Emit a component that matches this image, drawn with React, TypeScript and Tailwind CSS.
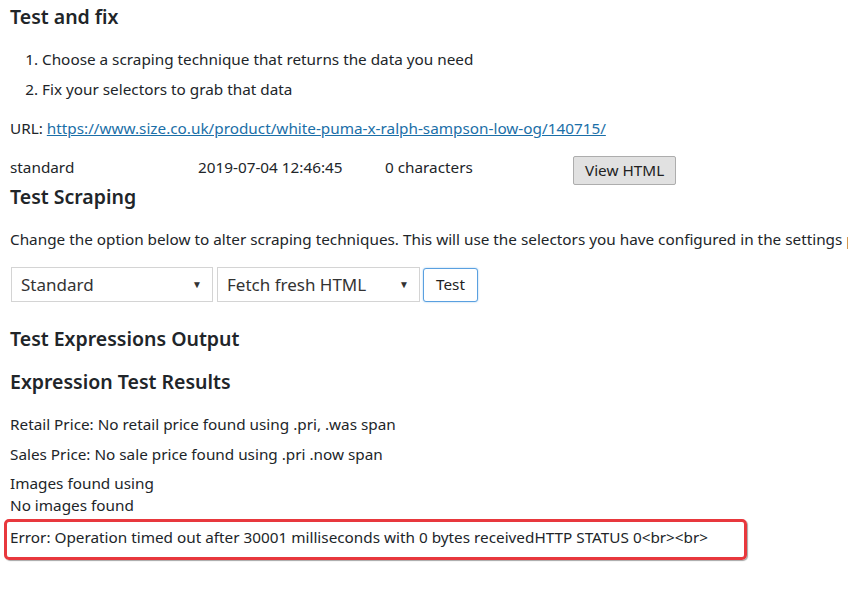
const FONT = { fontFamily: '"Noto Sans", "Open Sans", sans-serif' };

function Select({ value, width }: { value: string; width: string }) {
  return (
    <div
      className={`flex h-[35px] items-center justify-between border border-[#d4d4d4] bg-white pl-[9px] pr-[10px] text-[17px] text-[#333] ${width}`}
    >
      <span>{value}</span>
      <span className="text-[10px] text-[#333]">▼</span>
    </div>
  );
}

export default function App() {
  return (
    <div
      className="relative h-[605px] w-[848px] overflow-hidden bg-white text-[15.3px] text-[#212529]"
      style={FONT}
    >
      <div className="px-[10px] pt-[3px]">
        <h2 className="text-[19.5px] font-semibold leading-[28px]">Test and fix</h2>

        <ol className="mt-[13px] list-decimal pl-[32px] leading-[30px]">
          <li>Choose a scraping technique that returns the data you need</li>
          <li>Fix your selectors to grab that data</li>
        </ol>

        <p className="mt-[13px] leading-[22px]">
          URL:{" "}
          <a className="text-[#1b6fa8] underline" href="#">
            https://www.size.co.uk/product/white-puma-x-ralph-sampson-low-og/140715/
          </a>
        </p>

        <div className="mt-[17px] flex h-[22px] items-start">
          <span className="w-[188px]">standard</span>
          <span className="w-[187px]">2019-07-04 12:46:45</span>
          <span className="w-[188px]">0 characters</span>
          <button className="h-[29px] shrink-0 rounded-[2px] border border-[#adadad] bg-[#e1e1e1] px-[11px] text-[15.3px] text-[#222]">
            View HTML
          </button>
        </div>

        <h2 className="mt-[5px] text-[19.5px] font-semibold leading-[28px]">Test Scraping</h2>

        <p className="mt-[17px] whitespace-nowrap leading-[22px]">
          Change the option below to alter scraping techniques. This will use the selectors you have configured in the settings page.
        </p>

        <div className="mt-[17px] flex items-center gap-[4px] pl-[1px]">
          <Select value="Standard" width="w-[202px]" />
          <Select value="Fetch fresh HTML" width="w-[203px]" />
          <button className="-ml-[1px] h-[34px] rounded-[3px] border border-[#5aa0e0] bg-white px-[12px] text-[15.3px] text-[#222] shadow-[0_0_2px_rgba(0,120,215,0.4)]">
            Test
          </button>
        </div>

        <h2 className="mt-[23px] text-[19.5px] font-semibold leading-[28px]">
          Test Expressions Output
        </h2>
        <h2 className="mt-[15px] text-[19.5px] font-semibold leading-[28px]">
          Expression Test Results
        </h2>

        <p className="mt-[17px] leading-[22px]">
          Retail Price: No retail price found using .pri, .was span
        </p>
        <p className="mt-[8px] leading-[22px]">
          Sales Price: No sale price found using .pri .now span
        </p>
        <p className="mt-[7px] leading-[22px]">Images found using</p>
        <p className="leading-[22px]">No images found</p>
      </div>

      <div className="ml-[4px] mt-[3px] h-[41px] w-[743px] rounded-[5px] border-[3px] border-[#e8383d] px-[3px] pt-[4px] leading-[22px] shadow-[1px_1px_1px_rgba(0,0,0,0.35)]">
        Error: Operation timed out after 30001 milliseconds with 0 bytes receivedHTTP STATUS 0&lt;br&gt;&lt;br&gt;
      </div>
    </div>
  );
}
